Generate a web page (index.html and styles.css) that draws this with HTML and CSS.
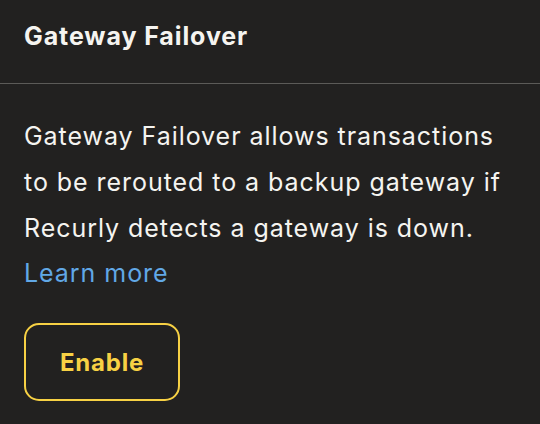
FILE: index.html
```html
<!DOCTYPE html>
<html>
<head>
<meta charset="utf-8">
<link rel="stylesheet" href="styles.css">
</head>
<body>
<div class="panel">
  <div class="header">
    <h2 class="title">Gateway Failover</h2>
  </div>
  <div class="body">
    <p class="desc">Gateway Failover allows transactions to be rerouted to a backup gateway if Recurly detects a gateway is down. <a class="link" href="#">Learn more</a></p>
    <button class="btn">Enable</button>
  </div>
</div>
</body>
</html>
```
FILE: styles.css
```css
html, body {
  margin: 0;
  padding: 0;
  background: #222120;
}
.panel {
  width: 540px;
  height: 424px;
  background: #222120;
  font-family: "Inter", "Lato", sans-serif;
  color: #f5f4f0;
  overflow: hidden;
}
.header {
  height: 84px;
  border-bottom: 1px solid #5c5b58;
  box-sizing: border-box;
  padding: 21px 24px 0;
}
.title {
  margin: 0;
  font-size: 25px;
  font-weight: 700;
  line-height: 30px;
  letter-spacing: 0.9px;
}
.body {
  padding: 29px 24px 0;
}
.desc {
  margin: 0;
  font-size: 25px;
  line-height: 46px;
  letter-spacing: 0.95px;
  width: 484px;
}
.link {
  color: #61a8e6;
  text-decoration: none;
  display: block;
  line-height: 45px;
}
.btn {
  display: block;
  margin-top: 27px;
  width: 156px;
  height: 78px;
  padding: 0;
  background: transparent;
  border: 2px solid #f7d144;
  border-radius: 15px;
  color: #f7d144;
  font-family: inherit;
  font-size: 24px;
  font-weight: 700;
  letter-spacing: 0.8px;
  cursor: pointer;
}
```
